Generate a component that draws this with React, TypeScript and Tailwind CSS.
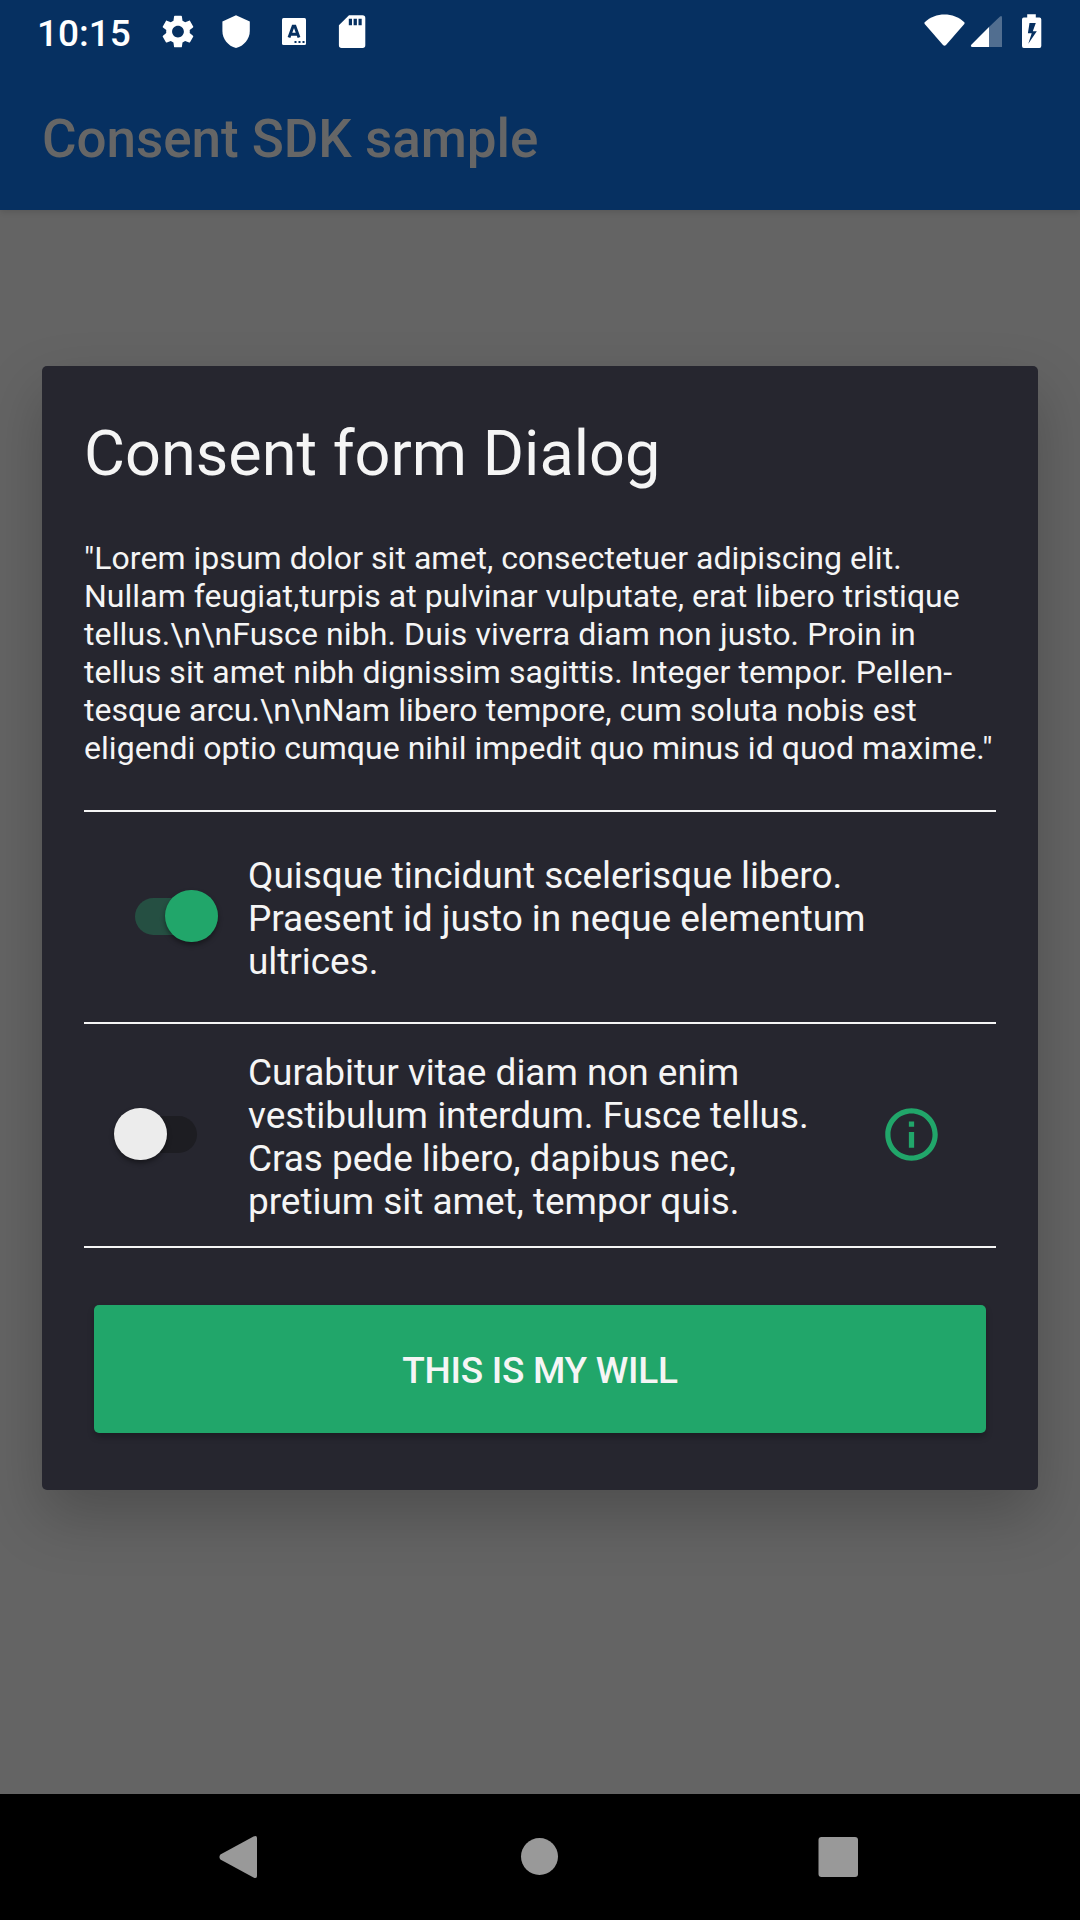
import type { ReactNode } from "react";

const roboto = "font-[Roboto,sans-serif]";

function StatusIcon({ children }: { children: ReactNode }) {
  return (
    <svg viewBox="0 0 58 64" className="h-[64px] w-[58px]" fill="white">
      {children}
    </svg>
  );
}

function StatusBar() {
  return (
    <div className="flex h-[64px] items-start justify-between text-white">
      <div className="flex">
        <div className="w-[149px] pt-[12px] pl-[37px] text-[37px] leading-[43px] font-medium">10:15</div>
        <StatusIcon>
          <g transform="translate(9.3 11.9) scale(1.64)">
            <path d="M19.14 12.94c.04-.3.06-.61.06-.94 0-.32-.02-.64-.07-.94l2.03-1.58c.18-.14.23-.41.12-.61l-1.92-3.32c-.12-.22-.37-.29-.59-.22l-2.39.96c-.5-.38-1.03-.7-1.62-.94l-.36-2.54c-.04-.24-.24-.41-.48-.41h-3.84c-.24 0-.43.17-.47.41l-.36 2.54c-.59.24-1.13.57-1.62.94l-2.39-.96c-.22-.08-.47 0-.59.22L2.74 8.87c-.12.21-.08.47.12.61l2.03 1.58c-.05.3-.09.63-.09.94s.02.64.07.94l-2.03 1.58c-.18.14-.23.41-.12.61l1.92 3.32c.12.22.37.29.59.22l2.39-.96c.5.38 1.03.7 1.62.94l.36 2.54c.05.24.24.41.48.41h3.84c.24 0 .44-.17.47-.41l.36-2.54c.59-.24 1.13-.56 1.62-.94l2.39.96c.22.08.47 0 .59-.22l1.92-3.32c.12-.22.07-.47-.12-.61l-2.01-1.58zM12 15.6c-1.98 0-3.6-1.62-3.6-3.6s1.62-3.6 3.6-3.6 3.6 1.62 3.6 3.6-1.62 3.6-3.6 3.6z" />
          </g>
        </StatusIcon>
        <StatusIcon>
          <path d="M29 15.3 L42.8 21.4 V31 C42.8 39 37 46 29 48 C21 46 15.4 39 15.4 31 V21.4 Z" />
        </StatusIcon>
        <StatusIcon>
          <path
            fillRule="evenodd"
            d="M18.5 18H39.500Q41 18 41 19.500V43.500Q41 45 39.500 45H18.500Q17 45 17 43.500V19.500Q17 18 18.500 18Z"
          />
          <path d="M24 37.600 L28.100 26.200 H29.900 L34 37.600 M25.500 34.200 H32.500" fill="none" stroke="#063061" strokeWidth="2.900" />
          <path d="M29.500 41h2v2h-2zM33.500 41h2v2h-2zM37.500 41h2v2h-2z" fill="#063061" />
        </StatusIcon>
        <StatusIcon>
          <path
            fillRule="evenodd"
            d="M26 15.300H39.500Q42.300 15.300 42.300 18V45.200Q42.300 47.900 39.600 47.900H18.600Q15.900 47.900 15.900 45.200V25.200ZM25.800 18.800V25.300H29V18.800ZM30.600 18.800V25.300H33.900V18.800ZM35.500 18.800V25.300H38.700V18.800Z"
          />
        </StatusIcon>
      </div>
      <svg viewBox="0 0 160 64" className="h-[64px] w-[160px]" fill="white">
        <path d="M4.700 22.300 C15.500 12 33.500 12 44.300 22.300 Q45 23 44.300 24 L26 45 Q24.500 46.600 23 45 L4.700 24 Q4 23 4.700 22.300Z" />
        <path d="M69 27 V47 H52.300 Q50 46.700 51.300 44.700Z" />
        <path d="M69 27 L80 16.500 Q82 15 82 17.500 V47 H69Z" opacity="0.3" />
        <path
          fillRule="evenodd"
          d="M107.200 14.200H115.800V17.500H119.500Q121.300 17.500 121.300 19.500V46Q121.300 48 119.500 48H103.800Q102 48 102 46V19.500Q102 17.500 103.800 17.500H107.200ZM109.500 23L107.900 33.300H111.700L108.300 43.700L116.800 31.200H112.800L115.800 23Z"
        />
      </svg>
    </div>
  );
}

function Switch({ on }: { on: boolean }) {
  return (
    <div className={on ? "relative ml-[51px] h-[37px] w-[82.500px] rounded-full bg-[#254f42]" : "relative ml-[30px] h-[37px] w-[83px] rounded-full bg-[#1d1d22]"}>
      <div
        className={
          on
            ? "absolute -top-[8px] right-0 size-[52.500px] rounded-full bg-[#21a66a] shadow-[0_3px_5px_rgba(0,0,0,0.4)]"
            : "absolute -top-[8px] left-0 size-[52.500px] rounded-full bg-[#ececec] shadow-[0_3px_5px_rgba(0,0,0,0.4)]"
        }
      />
    </div>
  );
}

function InfoIcon() {
  return (
    <svg viewBox="0 0 24 24" className="mb-[2px] size-[63px]" fill="#21a66a">
      <path d="M11 7h2v2h-2zm0 4h2v6h-2zm1-9C6.480 2 2 6.480 2 12s4.480 10 10 10 10-4.480 10-10S17.520 2 12 2zm0 18c-4.410 0-8-3.590-8-8s3.590-8 8-8 8 3.590 8 8-3.590 8-8 8z" />
    </svg>
  );
}

function ConsentRow({ on, lines, info }: { on: boolean; lines: string[]; info?: boolean }) {
  return (
    <div className={on ? "flex h-[212px] items-center border-b-2 border-[#f5f5f5]" : "flex h-[224px] items-center border-b-2 border-[#f5f5f5]"}>
      <div className="w-[164px] shrink-0 pb-[2px]">
        <Switch on={on} />
      </div>
      <p className="w-[632px] pt-[3px] text-[37px] leading-[43px] tracking-[-0.050px] whitespace-nowrap">
        {lines.map((line) => (
          <span key={line} className="block">
            {line}
          </span>
        ))}
      </p>
      {info && <InfoIcon />}
    </div>
  );
}

const bodyLines = [
  '"Lorem ipsum dolor sit amet, consectetuer adipiscing elit.',
  "Nullam feugiat,turpis at pulvinar vulputate, erat libero tristique",
  "tellus.\\n\\nFusce nibh. Duis viverra diam non justo. Proin in",
  "tellus sit amet nibh dignissim sagittis. Integer tempor. Pellen-",
  "tesque arcu.\\n\\nNam libero tempore, cum soluta nobis est",
  'eligendi optio cumque nihil impedit quo minus id quod maxime."',
];

export default function App() {
  return (
    <div className={`flex h-[1920px] w-[1080px] flex-col overflow-hidden bg-[#646464] ${roboto}`}>
      <header className="h-[210px] shrink-0 bg-[#063061] shadow-[0_2px_6px_rgba(0,0,0,0.12)]">
        <StatusBar />
        <h1 className="pt-[44px] pl-[42px] text-[53px] leading-[62px] font-medium tracking-[-0.050px] text-[#666666]">Consent SDK sample</h1>
      </header>

      <main className="flex-1 px-[42px] pt-[156px]">
        <section className="h-[1124px] rounded-[5px] bg-[#26262f] px-[42px] text-[#f5f5f5] shadow-[0_26px_60px_rgba(0,0,0,0.22)]">
          <h2 className="pt-[51px] text-[63px] leading-[74px]">Consent form Dialog</h2>
          <p className="mt-[48px] h-[273px] border-b-2 border-[#f5f5f5] text-[32px] leading-[38px] tracking-[0.040px] whitespace-nowrap">
            {bodyLines.map((line, i) => (
              <span key={line} className={i === 2 ? "block tracking-[0.100px]" : "block"}>
                {line}
              </span>
            ))}
          </p>
          <ConsentRow
            on
            lines={["Quisque tincidunt scelerisque libero.", "Praesent id justo in neque elementum", "ultrices."]}
          />
          <ConsentRow
            on={false}
            info
            lines={[
              "Curabitur vitae diam non enim",
              "vestibulum interdum. Fusce tellus.",
              "Cras pede libero, dapibus nec,",
              "pretium sit amet, tempor quis.",
            ]}
          />
          <button className="mt-[57px] ml-[10px] block h-[128px] w-[892px] rounded-[5px] bg-[#21a66a] pt-[3px] text-[37px] font-medium tracking-[-0.280px] shadow-[0_4px_6px_rgba(0,0,0,0.25)]">
            THIS IS MY WILL
          </button>
        </section>
      </main>

      <nav className="h-[126px] shrink-0 bg-black">
        <svg viewBox="0 0 1080 126" className="h-[126px] w-[1080px]" fill="#999999">
          <path d="M220.400 60.500 L253.500 42.500 Q257 41 257 44 V82 Q257 85 253.500 83.500 L220.400 65.500 Q218.500 63 220.400 60.500Z" />
          <circle cx="539.500" cy="62.500" r="18.500" />
          <rect x="818.500" y="43" width="39.500" height="40" rx="3" />
        </svg>
      </nav>
    </div>
  );
}
